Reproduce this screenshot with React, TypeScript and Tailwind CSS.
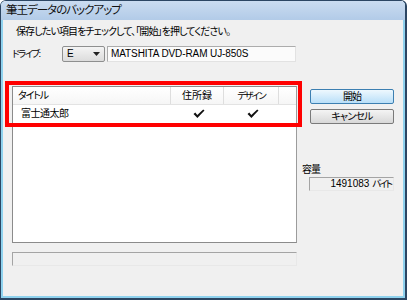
import React from "react";

function Check() {
  return (
    <svg width="12" height="10" viewBox="0 0 12 10" className="block">
      <path d="M0.5 5 L2.3 3.6 L4.3 6 L10.2 0.4 L11.5 1.6 L4.4 9 Z" fill="#111" />
    </svg>
  );
}

export default function App() {
  return (
    <div className="relative w-[407px] h-[300px] overflow-hidden bg-white font-['Liberation_Sans','Noto_Sans_CJK_JP',sans-serif] [font-feature-settings:'palt'] text-[10px] text-black">
      <div className="w-full h-full border-l border-t border-r-2 border-b-2 border-[#2c4663] rounded-t-[6px] overflow-hidden">
        <div className="w-full h-full flex flex-col border-x-2 border-b-2 border-[#8fd2ee] bg-[#f0f0f0]">
          {/* title bar */}
          <div className="h-[19px] -mx-[2px] shrink-0 bg-gradient-to-b from-[#cadcf0] to-[#b2cbe8] flex items-center pl-[5px]">
            <span className="text-[11.5px] leading-none tracking-[-1px] text-[#111]">筆王データのバックアップ</span>
          </div>
          {/* body */}
          <div className="flex-1 flex flex-col pl-[9px] pt-[6px]">
            <div className="h-[12px] leading-[12px] pl-[4px] text-[10px] tracking-[-0.9px]">
              保存したい項目をチェックして、「開始」を押してください。
            </div>
            <div className="mt-[8px] h-[16px] flex items-center">
              <div className="w-[50px] leading-none text-[9.5px] tracking-[-1.5px]">ドライブ:</div>
              <div className="w-[43px] h-[16px] border border-[#8e8f8f] rounded-[2px] bg-gradient-to-b from-[#f4f4f4] to-[#dcdcdc] flex items-center justify-between pl-[4px] pr-[4px]">
                <span className="leading-none">E</span>
                <svg width="7" height="4" viewBox="0 0 7 4"><path d="M0 0 H7 L3.5 4 Z" fill="#222" /></svg>
              </div>
              <div className="ml-[2px] w-[189px] h-[16px] border border-[#acacac] border-r-[#e2e2e2] border-b-[#e2e2e2] bg-[#fbfbfb] flex items-center pl-[3px]">
                <span className="leading-none tracking-[-0.1px]">MATSHITA DVD-RAM UJ-850S</span>
              </div>
            </div>
            <div className="mt-[24px] flex">
              {/* left column */}
              <div className="w-[285px] flex flex-col">
                <div className="h-[157px] border border-[#8b8b8b] border-r-[#9c9c9c] bg-white flex flex-col">
                  <div className="h-[18px] flex border-b border-[#e3e3e3] bg-gradient-to-b from-white to-[#f6f6f6]">
                    <div className="w-[158px] border-r border-[#dedede] flex items-center pl-[5px] leading-none tracking-[-1.2px]">タイトル</div>
                    <div className="w-[53px] border-r border-[#dedede] flex items-center justify-center leading-none">住所録</div>
                    <div className="w-[55px] border-r border-[#dedede] flex items-center justify-center leading-none text-[9.5px] tracking-[-1.8px]">デザイン</div>
                    <div className="flex-1" />
                  </div>
                  <div className="h-[18px] flex">
                    <div className="w-[159px] flex items-center pl-[8px] leading-none tracking-[-0.5px]">富士通太郎</div>
                    <div className="w-[53px] flex items-center justify-center"><Check /></div>
                    <div className="w-[55px] flex items-center justify-center"><Check /></div>
                  </div>
                </div>
                <div className="mt-[9px] h-[14px] border border-[#a4a4a4] border-r-[#e8e8e8] border-b-[#e8e8e8] bg-[#f0f0f0]" />
              </div>
              {/* right column */}
              <div className="ml-[5px] w-[92px] flex flex-col">
                <div className="ml-[8px] mt-[3px] w-[84px] h-[15px] border border-[#3c7fb1] rounded-[2px] bg-gradient-to-b from-[#eef8fe] to-[#b9dff8] flex items-center justify-center leading-none tracking-[-1px]">開始</div>
                <div className="ml-[8px] mt-[5px] w-[84px] h-[15px] border border-[#7a7a7a] rounded-[2px] bg-gradient-to-b from-[#f4f4f4] to-[#d8d8d8] flex items-center justify-center leading-none tracking-[-0.8px]">キャンセル</div>
                <div className="mt-[40px] h-[12px] leading-[12px] tracking-[-1px]">容量</div>
                <div className="ml-[7px] mt-[1px] w-[85px] h-[14px] border border-[#a4a4a4] border-r-[#e8e8e8] border-b-[#e8e8e8] bg-[#f0f0f0] flex items-center justify-end pr-[2px] leading-none">
                  <span>1491083</span>
                  <span className="ml-[3px] text-[9.5px] tracking-[-2px]">バイト</span>
                </div>
              </div>
            </div>
          </div>
        </div>
      </div>
      {/* red annotation box */}
      <div className="absolute left-[5px] top-[81px] w-[297px] h-[46px] border-[4px] border-[#ff0000]" />
    </div>
  );
}
